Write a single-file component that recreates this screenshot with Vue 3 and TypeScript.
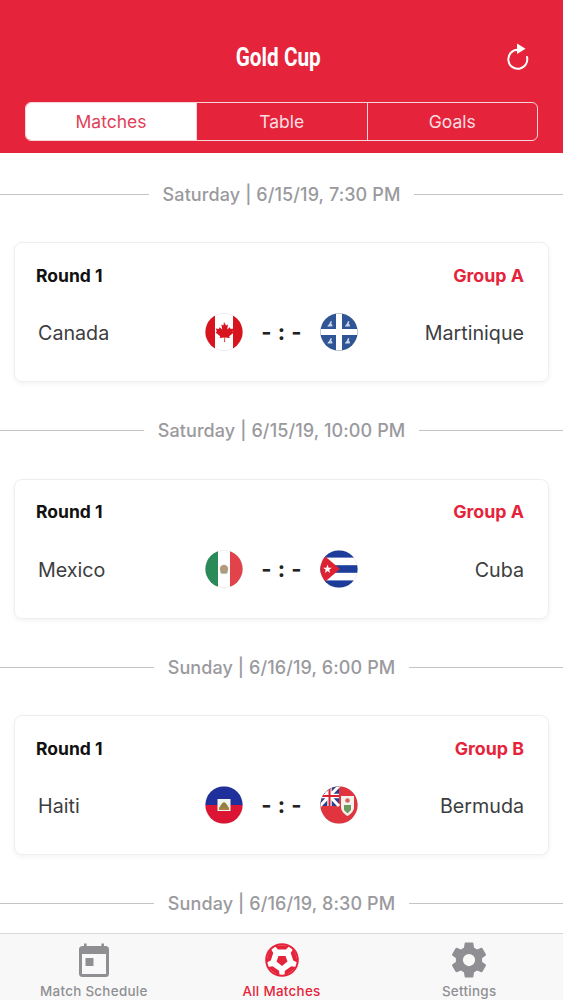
<script setup lang="ts">
interface Match {
  date: string
  group: string
  home: string
  away: string
  homeFlag: string
  awayFlag: string
}

const tabs = ['Matches', 'Table', 'Goals']

const matches: Match[] = [
  { date: 'Saturday | 6/15/19, 7:30 PM', group: 'Group A', home: 'Canada', away: 'Martinique', homeFlag: 'ca', awayFlag: 'mq' },
  { date: 'Saturday | 6/15/19, 10:00 PM', group: 'Group A', home: 'Mexico', away: 'Cuba', homeFlag: 'mx', awayFlag: 'cu' },
  { date: 'Sunday | 6/16/19, 6:00 PM', group: 'Group B', home: 'Haiti', away: 'Bermuda', homeFlag: 'ht', awayFlag: 'bm' },
]

const patchAngles = [0, 72, 144, 216, 288]

function flagsOf(m: Match): string[] {
  return [m.homeFlag, m.awayFlag]
}
</script>

<template>
  <div class="screen">
    <header class="header">
      <div class="title-row">
        <h1 class="title">Gold Cup</h1>
        <svg class="refresh" viewBox="0 0 24 28" fill="none">
          <path d="M11.500 7.800A9.500 9.500 0 1 0 21 15" stroke="#fff" stroke-width="2" stroke-linecap="round" />
          <path d="M11 1.500 19.500 6.800 11 12Z" fill="#fff" />
        </svg>
      </div>
      <div class="segments">
        <div v-for="(t, i) in tabs" :key="t" class="segment" :class="{ active: i === 0 }">{{ t }}</div>
      </div>
    </header>

    <main class="list">
      <section v-for="m in matches" :key="m.date" class="block">
        <div class="date-row"><span class="date">{{ m.date }}</span></div>
        <article class="card">
          <div class="card-top">
            <span class="round">Round 1</span>
            <span class="group">{{ m.group }}</span>
          </div>
          <div class="teams">
            <span class="team home">{{ m.home }}</span>
            <div class="center">
              <template v-for="(f, idx) in flagsOf(m)" :key="f">
                <svg class="flag" viewBox="0 0 38 38">
                  <defs>
                    <clipPath :id="'clip-' + f"><circle cx="19" cy="19" r="18.600" /></clipPath>
                  </defs>
                  <g :clip-path="'url(#clip-' + f + ')'">
                    <template v-if="f === 'ca'">
                      <rect width="38" height="38" fill="#fff" />
                      <rect width="10" height="38" fill="#d8141e" />
                      <rect x="28" width="10" height="38" fill="#d8141e" />
                      <path d="M19 9l2 3.600 2-1-.8 5 2.600-2.400.8 1.800 3-.6-1 3.200 1.200.8-4.600 3.800.6 1.800-4.800-.6.2 4.600h-1l.2-4.600-4.800.6.6-1.800-4.600-3.800 1.200-.8-1-3.200 3 .6.8-1.800 2.600 2.400-.8-5 2 1z" fill="#d8141e" />
                    </template>
                    <template v-else-if="f === 'mq'">
                      <rect width="38" height="38" fill="#2f5596" />
                      <rect x="16" width="6" height="38" fill="#fff" />
                      <rect y="16" width="38" height="6" fill="#fff" />
                      <path d="M7.500 13.500c0-1.500 1.500-1.600 2-3 .2-1 1-2.600 1.600-2.600s1 .8.6 1.400l-.6 1c1 1 1.600 2.200 1.200 3.200zM25 13.500c0-1.500 1.500-1.600 2-3 .2-1 1-2.600 1.600-2.600s1 .8.6 1.400l-.6 1c1 1 1.600 2.200 1.200 3.200zM7.500 30.500c0-1.500 1.500-1.600 2-3 .2-1 1-2.600 1.600-2.600s1 .8.6 1.400l-.6 1c1 1 1.600 2.200 1.200 3.200zM25 30.500c0-1.500 1.500-1.600 2-3 .2-1 1-2.600 1.600-2.600s1 .8.6 1.400l-.6 1c1 1 1.600 2.200 1.200 3.200z" fill="#c9d4e6" />
                    </template>
                    <template v-else-if="f === 'mx'">
                      <rect width="13" height="38" fill="#2a8a58" />
                      <rect x="13" width="12" height="38" fill="#fff" />
                      <rect x="25" width="13" height="38" fill="#e2434b" />
                      <circle cx="19" cy="19" r="4.200" fill="#b49a78" />
                      <path d="M15 20.500a4.400 4.400 0 0 0 8 0l-1 3h-6z" fill="#6f9a73" />
                    </template>
                    <template v-else-if="f === 'cu'">
                      <rect width="38" height="38" fill="#fff" />
                      <rect width="38" height="7.600" fill="#1d3d9b" />
                      <rect y="15.200" width="38" height="7.600" fill="#1d3d9b" />
                      <rect y="30.400" width="38" height="7.600" fill="#1d3d9b" />
                      <path d="M0 2 20 19 0 36Z" fill="#dc2233" />
                      <path d="M7.500 14.600l1.100 3.100h3.300l-2.700 2 1 3.200-2.700-1.900-2.700 1.900 1-3.200-2.700-2h3.300z" fill="#fff" />
                    </template>
                    <template v-else-if="f === 'ht'">
                      <rect width="38" height="19" fill="#1f2f9c" />
                      <rect y="19" width="38" height="19" fill="#dc1535" />
                      <rect x="12.500" y="13" width="13" height="12" fill="#f4f4ee" />
                      <path d="M14 23c1-3 2.400-5.500 5-7 2.600 1.500 4 4 5 7z" fill="#8d7f42" />
                      <rect x="14" y="21.500" width="10" height="2.500" fill="#a8823c" />
                    </template>
                    <template v-else>
                      <rect width="38" height="38" fill="#e0343e" />
                      <rect width="19" height="20" fill="#2a3f8f" />
                      <path d="M0 0 19 20M19 0 0 20" stroke="#fff" stroke-width="3" />
                      <path d="M9.500 0V20M0 10H19" stroke="#fff" stroke-width="4.400" />
                      <path d="M9.500 0V20M0 10H19" stroke="#d8202e" stroke-width="2" />
                      <path d="M21 10h13v11c0 4-3 7-6.500 9C24 28 21 25 21 21z" fill="#f3f3ee" />
                      <path d="M24 19h7v5l-3.500 3.500-3.500-3.500z" fill="#6f9a5f" />
                      <circle cx="27.500" cy="14.500" r="2.300" fill="#d8635a" />
                    </template>
                  </g>
                  <circle cx="19" cy="19" r="18.600" fill="none" stroke="#000" stroke-opacity=".12" stroke-width=".6" />
                </svg>
                <span v-if="idx === 0" class="score">- : -</span>
              </template>
            </div>
            <span class="team away">{{ m.away }}</span>
          </div>
        </article>
      </section>
      <section class="block">
        <div class="date-row"><span class="date">Sunday | 6/16/19, 8:30 PM</span></div>
      </section>
    </main>

    <nav class="tabbar">
      <div class="tab">
        <svg class="tab-icon" viewBox="0 0 34 34">
          <path d="M7 .5h2.600V3h14.800V.5H27V3h1.500A3.500 3.500 0 0 1 32 6.500v24a3.500 3.500 0 0 1-3.500 3.500h-23A3.500 3.500 0 0 1 2 30.500v-24A3.500 3.500 0 0 1 5.500 3H7zM5 11v20h24V11z" fill="#8f8f93" fill-rule="evenodd" />
          <rect x="8.500" y="15" width="8" height="8" fill="#8f8f93" />
        </svg>
        <span class="tab-label">Match Schedule</span>
      </div>
      <div class="tab on">
        <svg class="tab-icon" viewBox="0 0 34 34">
          <circle cx="17" cy="17" r="16.800" fill="#e5243b" />
          <circle cx="17" cy="17" r="14.800" fill="#fff" />
          <path d="M13.500 13h7l2 5.500L17 23l-5.500-4.500z" fill="#e5243b" />
          <path
            v-for="a in patchAngles"
            :key="a"
            :transform="`rotate(${a} 17 17)`"
            d="M10 3.200C14 1.800 20 1.800 24 3.200L21 6.500H13Z"
            fill="#e5243b"
          />
        </svg>
        <span class="tab-label">All Matches</span>
      </div>
      <div class="tab">
        <svg class="tab-icon gear" viewBox="0 0 24 24">
          <path d="M19.430 12.980c.04-.32.070-.64.070-.98s-.03-.66-.07-.98l2.110-1.650a.5.500 0 0 0 .12-.64l-2-3.460a.5.500 0 0 0-.61-.22l-2.490 1a7.300 7.300 0 0 0-1.690-.98l-.38-2.650A.49.490 0 0 0 14 2h-4a.49.490 0 0 0-.49.420l-.38 2.650c-.61.250-1.170.59-1.690.98l-2.490-1a.49.490 0 0 0-.61.220l-2 3.460a.49.490 0 0 0 .12.640l2.110 1.650c-.04.320-.07.650-.07.980s.03.660.07.980l-2.110 1.650a.5.500 0 0 0-.12.640l2 3.460c.12.220.39.300.61.220l2.490-1c.52.400 1.080.73 1.690.98l.38 2.650c.03.240.24.420.49.420h4c.25 0 .46-.18.490-.42l.38-2.650c.61-.25 1.170-.59 1.690-.98l2.490 1c.23.090.49 0 .61-.22l2-3.460a.5.500 0 0 0-.12-.64zM12 15.500a3.500 3.500 0 1 1 0-7 3.500 3.500 0 0 1 0 7z" fill="#8f8f93" />
        </svg>
        <span class="tab-label">Settings</span>
      </div>
    </nav>
  </div>
</template>

<style scoped>
.screen {
  width: 563px;
  height: 1000px;
  display: flex;
  flex-direction: column;
  overflow: hidden;
  background: #fff;
  font-family: Inter, "Liberation Sans", sans-serif;
}
.header {
  height: 153px;
  flex: none;
  box-sizing: border-box;
  padding: 38px 25px 0;
  background: #e5243b;
}
.title-row {
  height: 38px;
  display: flex;
  align-items: center;
  justify-content: center;
  position: relative;
}
.title {
  margin: 0 6px 0 0;
  color: #fff;
  font-family: Roboto, sans-serif;
  font-size: 25px;
  font-weight: 700;
  transform: scaleX(0.83);
}
.refresh {
  position: absolute;
  right: 8px;
  top: 4px;
  width: 24px;
  height: 28px;
}
.segments {
  margin-top: 26px;
  height: 39px;
  box-sizing: border-box;
  display: flex;
  border: 1.500px solid #f6d5da;
  border-radius: 6px;
  overflow: hidden;
}
.segment {
  flex: 1;
  display: flex;
  align-items: center;
  justify-content: center;
  color: #fbdde1;
  font-size: 17.500px;
  border-left: 1.500px solid #f6d5da;
}
.segment:first-child {
  border-left: 0;
}
.segment.active {
  flex: 0 0 170px;
  background: #fff;
  color: #df3f58;
}
.list {
  flex: 1;
  min-height: 0;
  overflow: hidden;
}
.block {
  height: 236.500px;
  box-sizing: border-box;
  padding-top: 30px;
}
.date-row {
  height: 22px;
  display: flex;
  align-items: center;
  gap: 14px;
}
.date-row::before,
.date-row::after {
  content: "";
  flex: 1;
  height: 1px;
  background: #c4c4c6;
}
.date {
  color: #9a9a9e;
  font-size: 18px;
  font-weight: 500;
  letter-spacing: 0.1px;
}
.card {
  margin: 37px 14px 0;
  height: 140px;
  box-sizing: border-box;
  padding: 21px 24px 0 21px;
  border: 1px solid #efefef;
  border-radius: 8px;
  box-shadow: 0 2px 5px rgba(0, 0, 0, 0.05);
}
.card-top {
  display: flex;
  justify-content: space-between;
  align-items: center;
  height: 22px;
  font-weight: 700;
}
.round {
  color: #111;
  font-size: 17.500px;
}
.group {
  color: #e5243b;
  font-size: 17.800px;
}
.teams {
  margin-top: 27px;
  height: 38px;
  display: grid;
  grid-template-columns: 1fr auto 1fr;
  align-items: center;
}
.team {
  color: #3d3d40;
  font-size: 19.700px;
  position: relative;
  top: 1px;
}
.home {
  padding-left: 2px;
}
.away {
  text-align: right;
}
.center {
  display: flex;
  align-items: center;
  margin-left: 3px;
}
.flag {
  width: 38px;
  height: 38px;
  flex: none;
}
.score {
  width: 77px;
  text-align: center;
  color: #222;
  font-size: 22px;
  font-weight: 700;
  word-spacing: 1px;
}
.tabbar {
  height: 67px;
  flex: none;
  box-sizing: border-box;
  display: flex;
  border-top: 1px solid #d8d8d8;
  background: #f8f8f8;
}
.tab {
  flex: 1;
  display: flex;
  flex-direction: column;
  align-items: center;
  color: #8f8f93;
  padding-top: 9px;
}
.tab.on {
  color: #e5243b;
}
.tab-icon {
  width: 34px;
  height: 34px;
}
.gear {
  width: 42px;
  height: 42px;
  margin: -4px 0;
}
.tab-label {
  margin-top: 6px;
  font-size: 13.400px;
  line-height: 16px;
  font-weight: 500;
  letter-spacing: 0.3px;
}
</style>
